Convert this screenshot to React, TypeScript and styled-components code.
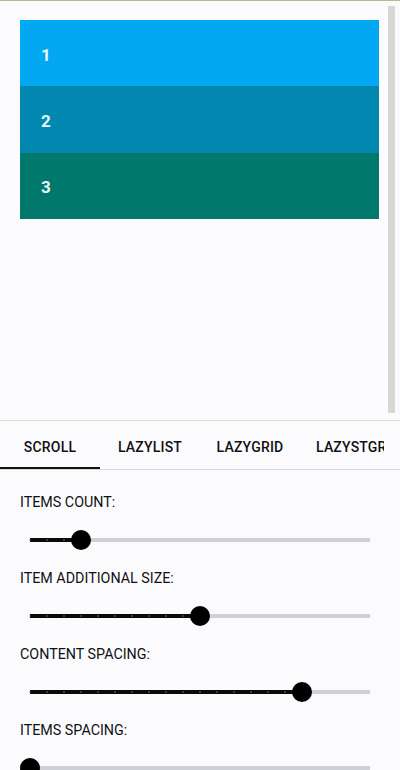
import React from "react";
import styled, { createGlobalStyle } from "styled-components";

const GlobalStyle = createGlobalStyle`
  html, body { margin: 0; padding: 0; background: #fbfbfe; }
  body { font-family: Roboto, "Noto Sans", "Liberation Sans", sans-serif; color: #111; }
`;

const Page = styled.div`
  width: 400px;
  height: 770px;
  display: flex;
  flex-direction: column;
  overflow: hidden;
  background: #fbfbfe;
`;

const Preview = styled.div`
  position: relative;
  height: 421px;
  box-sizing: border-box;
  padding: 20px;
  border-top: 1px solid #b9b98a;
  border-bottom: 1px solid #dcdcd8;
  flex-shrink: 0;
`;

const ItemsBox = styled.div`
  width: 359px;
  height: 199px;
  display: flex;
  flex-direction: column;
  margin-top: -1px;
`;

const Item = styled.div<{ $bg: string }>`
  flex: 1;
  display: flex;
  align-items: center;
  padding-left: 21px;
  padding-top: 3px;
  background: ${(p) => p.$bg};
  color: #eaf6fb;
  font-size: 17px;
  font-weight: 700;
`;

const Scrollbar = styled.div`
  position: absolute;
  right: 5px;
  top: 5px;
  width: 7px;
  height: 407px;
  background: #d8d8d2;
`;

const TabRow = styled.div`
  position: relative;
  display: flex;
  height: 48px;
  border-bottom: 1px solid #d8d8d8;
  flex-shrink: 0;
  overflow: hidden;
`;

const Tab = styled.div<{ $active?: boolean; $clip?: boolean }>`
  position: relative;
  flex: 0 0 100px;
  width: 100px;
  box-sizing: border-box;
  padding: 4px 16px 0;
  display: flex;
  align-items: center;
  justify-content: ${(p) => (p.$clip ? "flex-start" : "center")};
  overflow: hidden;
  white-space: nowrap;
  font-size: 14px;
  font-weight: 500;
  letter-spacing: 0.2px;
  color: #111;
`;

const TabLabel = styled.span`
  overflow: hidden;
  display: block;
`;

const Indicator = styled.div`
  position: absolute;
  left: 0;
  right: 0;
  bottom: -1px;
  height: 3px;
  background: #111;
`;

const Controls = styled.div`
  padding-top: 22px;
  display: flex;
  flex-direction: column;
`;

const Group = styled.div`
  display: flex;
  flex-direction: column;
`;

const Label = styled.div`
  height: 20px;
  line-height: 20px;
  padding-left: 20px;
  font-size: 14.3px;
  color: #111;
`;

const SliderWrap = styled.div`
  height: 56px;
  margin: 0 20px;
  padding: 0 10px;
  display: flex;
  align-items: center;
`;

const Track = styled.div`
  position: relative;
  flex: 1;
  height: 4px;
  background: #cfcfd6;
`;

const Active = styled.div`
  position: absolute;
  left: 0;
  top: 0;
  bottom: 0;
  background: #0a0a0a;
`;

const Tick = styled.div`
  position: absolute;
  top: 1px;
  width: 2px;
  height: 2px;
  border-radius: 1px;
  margin-left: -1px;
  background: rgba(120, 120, 120, 0.6);
`;

const Thumb = styled.div`
  position: absolute;
  top: 50%;
  width: 20px;
  height: 20px;
  margin: -10px 0 0 -10px;
  border-radius: 50%;
  background: #000;
`;

const Slider: React.FC<{ value: number; steps?: number }> = ({ value, steps = 20 }) => {
  const ticks = Array.from({ length: steps + 1 }, (_, i) => i / steps).filter((t) => t < value);
  return (
    <SliderWrap>
      <Track>
        <Active style={{ width: `${value * 100}%` }} />
        {ticks.map((t, i) => (
          <Tick key={i} style={{ left: `${t * 100}%` }} />
        ))}
        <Thumb style={{ left: `${value * 100}%` }} />
      </Track>
    </SliderWrap>
  );
};

const items = [
  { n: 1, bg: "#03a8f2" },
  { n: 2, bg: "#0288b0" },
  { n: 3, bg: "#00786c" },
];

const controls = [
  { label: "ITEMS COUNT:", value: 0.15 },
  { label: "ITEM ADDITIONAL SIZE:", value: 0.5 },
  { label: "CONTENT SPACING:", value: 0.8 },
  { label: "ITEMS SPACING:", value: 0 },
];

const tabs = ["SCROLL", "LAZYLIST", "LAZYGRID", "LAZYSTGRID"];

export default function App() {
  return (
    <Page>
      <GlobalStyle />
      <Preview>
        <ItemsBox>
          {items.map((it) => (
            <Item key={it.n} $bg={it.bg}>
              {it.n}
            </Item>
          ))}
        </ItemsBox>
        <Scrollbar />
      </Preview>
      <TabRow>
        {tabs.map((t, i) => (
          <Tab key={t} $active={i === 0} $clip={i === 3}>
            <TabLabel>{t}</TabLabel>
            {i === 0 && <Indicator />}
          </Tab>
        ))}
      </TabRow>
      <Controls>
        {controls.map((c) => (
          <Group key={c.label}>
            <Label>{c.label}</Label>
            <Slider value={c.value} />
          </Group>
        ))}
      </Controls>
    </Page>
  );
}
